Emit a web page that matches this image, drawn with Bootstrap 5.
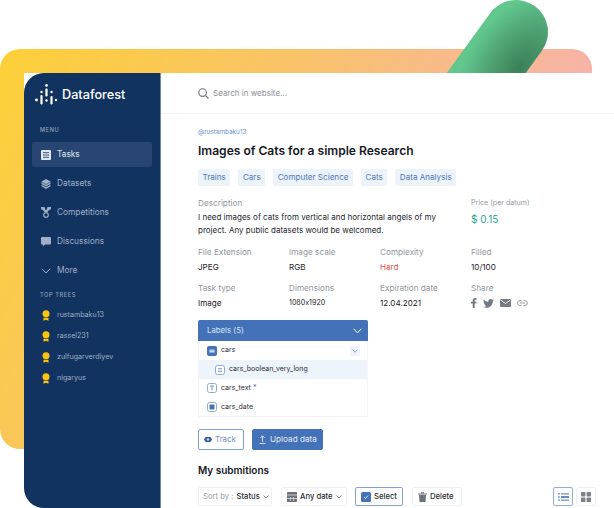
<!DOCTYPE html>
<html lang="en">
<head>
  <meta charset="UTF-8">
  <title>Dataforest</title>
  <link href="https://cdn.jsdelivr.net/npm/bootstrap@5.3.3/dist/css/bootstrap.min.css" rel="stylesheet">
  <style>
    html, body { height: 100%; }
    body { background: #fff; overflow: hidden; font-family: Inter, "Liberation Sans", sans-serif; color: #1b1f26; font-feature-settings: "calt" 0; }
    svg { flex: none; }
    .stage { position: relative; width: 614px; height: 508px; overflow: hidden; padding: 73px 0 0 24px; }
    .back-panel { position: absolute; left: 0; top: 49px; width: 592px; height: 400px; border-radius: 20px; background: linear-gradient(116deg, #fdd038 0%, #f9c464 35%, #f7b3a7 76%); }
    .green-pill { position: absolute; left: 484px; top: 0; width: 64px; height: 190px; border-radius: 32px; transform-origin: 32px 32px; transform: rotate(36deg); background: radial-gradient(ellipse 52px 85px at 56px 58px, #3b7f58 0%, #52a878 60%, #62c78d 100%); }
    .app-window { position: relative; width: 590px; height: 435px; background: #fff; }
    .side { width: 137px; height: 435px; flex: none; background: #12335f; border-radius: 20px 0 0 20px; border-right: 1px solid #6f87a8; color: #fff; padding: 9px 8px 0; }
    .brand { font-size: 12.7px; font-weight: 500; height: 26px; padding-left: 3px; gap: 5px; }
    .side-head { font-size: 5.6px; letter-spacing: .6px; color: #93a3bb; font-weight: 500; padding-left: 8px; line-height: 8px; }
    .side-link { height: 25px; margin-bottom: 4px; padding-left: 9px; gap: 6px; font-size: 8.3px; color: #9fb0c7; border-radius: 2px; }
    .side-link.is-on { background: #294672; color: #dfe6f0; }
    .tree-row { height: 21px; padding-left: 10px; gap: 7px; font-size: 7.1px; color: #9fb0c7; }
    .page { flex: 1; min-width: 0; }
    .search-bar { height: 41px; padding-left: 37px; gap: 4px; border-bottom: 1px solid #eef0f4; font-size: 8px; color: #8a8f98; }
    .content { padding: 14px 18px 0 37px; }
    .by-line { font-size: 6.4px; color: #6b90cc; line-height: 9px; }
    .title { font-size: 12.05px; font-weight: 600; line-height: 18px; margin: 5px 0 9px; color: #16191f; }
    .chip { height: 17px; padding: 0 4.5px; font-size: 8.1px; line-height: 17px; color: #4f78ba; background: #edf3fb; border-radius: 2px; }
    .info-grid { display: grid; grid-template-columns: repeat(4, 91px); margin-top: 11px; }
    .info-wide { grid-column: span 3; }
    .info-key { font-size: 8.2px; color: #92979f; line-height: 12px; }
    .info-val { font-size: 8.1px; color: #1e2228; line-height: 12px; margin-top: 3px; }
    .info-val.tight { font-size: 7.1px; }
    .info-text { font-size: 8px; line-height: 13px; color: #24282e; margin-top: 2px; }
    .price-key { font-size: 7.1px; }
    .price-val { font-size: 10px; line-height: 14px; color: #21a68c; margin-top: 3px; }
    .hard { color: #d9534f; }
    .cell-gap { margin-top: 9px; }
    .labels-box { width: 170px; margin-top: 11px; border-bottom: 1px solid #f0f1f5; border-left: 1px solid #f5f6f8; border-right: 1px solid #f5f6f8; }
    .labels-top { height: 21px; margin: 0 -1px; padding: 0 6px 0 9px; background: #4372b8; color: #d9e4f4; font-size: 7.8px; border-radius: 2px 2px 0 0; }
    .label-row { height: 19px; padding-left: 8px; gap: 4px; font-size: 7px; color: #2a2e35; }
    .label-row.sub { background: #edf4fc; padding-left: 16px; }
    .label-row.lh { height: 18.5px; }
    .fold { width: 10px; height: 10px; background: #edf3fb; margin-right: 7px; border-radius: 1px; }
    .req { color: #4372b8; font-size: 7px; }
    .act-btn { height: 21px; padding: 0 7px; font-size: 8.2px; border-radius: 2px; gap: 4px; line-height: 1; white-space: nowrap; }
    .act-btn.track { color: #6f8fc4; background: #fff; border: 1px solid #7fa1d2; width: 46px; padding: 0 0 0 5px; gap: 3px; font-size: 7.9px; }
    .act-btn.upload { color: #e3ebf7; background: #4372b8; border: 1px solid #4372b8; width: 71px; padding-left: 6px; }
    .sub-head { font-size: 10px; font-weight: 600; line-height: 14px; margin-top: 13px; color: #16191f; }
    .tool-row { margin-top: 10px; height: 19px; }
    .tool { height: 19px; border: 1px solid #eef0f4; border-radius: 2px; gap: 3px; font-size: 7.7px; color: #2a2e35; padding: 0 4px; font-weight: 500; white-space: nowrap; }
    .tool.mute-lead span:first-child { color: #9a9ea6; font-weight: 400; }
    .tool.picked { border-color: #7fa1d2; }
    .view-btn { width: 20px; height: 19px; border: 1px solid #eef0f4; border-radius: 2px; }
    .view-btn.picked { border-color: #8eb0dd; }
  </style>
</head>
<body>
  <div class="stage">
    <div class="back-panel"></div>
    <div class="green-pill"></div>

    <div class="app-window d-flex">
      <!-- Sidebar -->
      <aside class="side">
        <div class="brand d-flex align-items-center">
          <svg width="22" height="22" viewBox="0 0 22 22" fill="#fff">
            <circle cx="1.500" cy="16" r="1.400"/>
            <circle cx="6.500" cy="8" r="1.200"/><rect x="5.400" y="11" width="2.200" height="9.500" rx="1"/>
            <circle cx="11.500" cy="1.400" r="1.300"/><rect x="10.400" y="4.500" width="2.200" height="8" rx="1"/><circle cx="11.500" cy="16.500" r="1.200"/>
            <circle cx="16.500" cy="8" r="1.200"/><rect x="15.400" y="12" width="2.200" height="8.500" rx="1"/>
            <circle cx="21" cy="16" r="1.200"/>
          </svg>
          <span>Dataforest</span>
        </div>
        <div class="side-head" style="margin-top:18px;margin-bottom:8px">MENU</div>
        <div class="side-link is-on d-flex align-items-center">
          <svg width="10" height="10" viewBox="0 0 10 10"><rect width="10" height="10" rx="1" fill="#dfe6f0"/><path d="M2 2.700h6M2 5h6M2 7.300h6" stroke="#294672" stroke-width=".9"/></svg>
          <span>Tasks</span>
        </div>
        <div class="side-link d-flex align-items-center">
          <svg width="10" height="10" viewBox="0 0 10 10" fill="#9fb0c7"><path d="M5 0 9.500 2.500V5L5 7.500.5 5V2.500z"/><path d="M.5 5.800 5 8.300l4.500-2.500v1.400L5 10 .5 7.200z"/><path d="M.5 3 5 5.500 9.500 3" fill="none" stroke="#12335f" stroke-width=".5"/></svg>
          <span>Datasets</span>
        </div>
        <div class="side-link d-flex align-items-center">
          <svg width="10" height="11" viewBox="0 0 10 11"><path d="M0 0h3.500l1 3h1l1-3H10v2L7 4 6.300 5.500H3.700L3 4 0 2z" fill="#9fb0c7"/><circle cx="5" cy="8" r="2.300" fill="none" stroke="#9fb0c7" stroke-width="1.100"/></svg>
          <span>Competitions</span>
        </div>
        <div class="side-link d-flex align-items-center">
          <svg width="10" height="10" viewBox="0 0 10 10" fill="#9fb0c7"><path d="M1 0h8a1 1 0 0 1 1 1v5.500a1 1 0 0 1-1 1H4L2 9.500v-2H1a1 1 0 0 1-1-1V1a1 1 0 0 1 1-1z"/></svg>
          <span>Discussions</span>
        </div>
        <div class="side-link d-flex align-items-center" style="margin-bottom:0">
          <svg width="10" height="6" viewBox="0 0 10 6" fill="none" stroke="#b4c1d4" stroke-width=".9"><path d="M1 .8 5 5l4-4.200"/></svg>
          <span>More</span>
        </div>
        <div class="side-head" style="margin-top:8px;margin-bottom:6px">TOP TREES</div>
        <div class="tree-row d-flex align-items-center"><svg width="8" height="11" viewBox="0 0 8 11" fill="#fdc50f"><circle cx="4" cy="3.700" r="3.500"/><path d="M1.500 7.700h5v3.100L4 9.700 1.500 10.800z"/></svg><span>rustambaku13</span></div>
        <div class="tree-row d-flex align-items-center"><svg width="8" height="11" viewBox="0 0 8 11" fill="#fdc50f"><circle cx="4" cy="3.700" r="3.500"/><path d="M1.500 7.700h5v3.100L4 9.700 1.500 10.800z"/></svg><span>rassel231</span></div>
        <div class="tree-row d-flex align-items-center"><svg width="8" height="11" viewBox="0 0 8 11" fill="#fdc50f"><circle cx="4" cy="3.700" r="3.500"/><path d="M1.500 7.700h5v3.100L4 9.700 1.500 10.800z"/></svg><span>zulfugarverdiyev</span></div>
        <div class="tree-row d-flex align-items-center"><svg width="8" height="11" viewBox="0 0 8 11" fill="#fdc50f"><circle cx="4" cy="3.700" r="3.500"/><path d="M1.500 7.700h5v3.100L4 9.700 1.500 10.800z"/></svg><span>nigaryus</span></div>
      </aside>

      <!-- Main page -->
      <main class="page">
        <div class="search-bar d-flex align-items-center">
          <svg width="11" height="11" viewBox="0 0 11 11" fill="none" stroke="#6f747c" stroke-width="1.100"><circle cx="4.600" cy="4.600" r="3.800"/><path d="m7.500 7.500 3 3"/></svg>
          <span>Search in website...</span>
        </div>
        <div class="content">
          <div class="by-line">@rustambaku13</div>
          <h1 class="title">Images of Cats for a simple Research</h1>
          <div class="d-flex" style="gap:8px">
            <span class="chip">Trains</span>
            <span class="chip">Cars</span>
            <span class="chip">Computer Science</span>
            <span class="chip">Cats</span>
            <span class="chip">Data Analysis</span>
          </div>

          <div class="info-grid">
            <div class="info-wide">
              <div class="info-key">Description</div>
              <div class="info-text">I need images of cats from vertical and horizontal angels of my<br>project. Any public datasets would be welcomed.</div>
            </div>
            <div>
              <div class="info-key price-key">Price (per datum)</div>
              <div class="price-val">$ 0.15</div>
            </div>
            <div class="cell-gap"><div class="info-key">File Extension</div><div class="info-val">JPEG</div></div>
            <div class="cell-gap"><div class="info-key">Image scale</div><div class="info-val">RGB</div></div>
            <div class="cell-gap"><div class="info-key">Complexity</div><div class="info-val hard">Hard</div></div>
            <div class="cell-gap"><div class="info-key">Filled</div><div class="info-val">10/100</div></div>
            <div class="cell-gap"><div class="info-key">Task type</div><div class="info-val">Image</div></div>
            <div class="cell-gap"><div class="info-key">Dimensions</div><div class="info-val tight">1080x1920</div></div>
            <div class="cell-gap"><div class="info-key">Expiration date</div><div class="info-val">12.04.2021</div></div>
            <div class="cell-gap">
              <div class="info-key">Share</div>
              <div class="d-flex align-items-center" style="gap:6px;margin-top:3px;height:12px">
                <svg width="6" height="10" viewBox="0 0 6 10" fill="#757b85"><path d="M1.700 10V5.500H0V3.700h1.700V2.400C1.700.800 2.700 0 4.100 0c.7 0 1.300 0 1.500.1v1.600h-1c-.8 0-.9.4-.9.900v1.100h1.900l-.3 1.800H3.700V10z"/></svg>
                <svg width="11" height="9" viewBox="0 0 24 20" fill="#757b85"><path d="M24 2.400a9.600 9.600 0 0 1-2.800.8A4.900 4.900 0 0 0 23.300.500a9.800 9.800 0 0 1-3.100 1.200 4.900 4.900 0 0 0-8.400 4.500A14 14 0 0 1 1.700.900a4.900 4.900 0 0 0 1.500 6.600 4.900 4.900 0 0 1-2.200-.6c0 2.400 1.700 4.400 3.900 4.900a4.900 4.900 0 0 1-2.200.1 4.900 4.900 0 0 0 4.600 3.400A9.900 9.900 0 0 1 0 17.300 14 14 0 0 0 7.500 19.500c9.100 0 14-7.500 14-14v-.6A10 10 0 0 0 24 2.400z"/></svg>
                <svg width="11" height="8" viewBox="0 0 11 8"><rect width="11" height="8" rx="1" fill="#757b85"/><path d="m.5 1 5 3.500 5-3.500" fill="none" stroke="#fff" stroke-width=".8"/></svg>
                <svg width="11" height="6" viewBox="0 0 11 6" fill="none" stroke="#8e939b" stroke-width=".9"><path d="M4.500.6H3a2.400 2.400 0 0 0 0 4.800h1.500M6.500.6H8a2.400 2.400 0 0 1 0 4.800H6.500M3 3h5"/></svg>
              </div>
            </div>
          </div>

          <!-- Labels -->
          <div class="labels-box">
            <div class="labels-top d-flex align-items-center justify-content-between">
              <span>Labels (5)</span>
              <svg width="9" height="6" viewBox="0 0 9 6" fill="none" stroke="#fff" stroke-width="1"><path d="M.7.800 4.500 4.800 8.300.8"/></svg>
            </div>
            <div class="label-row d-flex align-items-center">
              <svg width="10" height="10" viewBox="0 0 10 10"><rect width="10" height="10" rx="2" fill="#4372b8"/><path d="M2.500 3.500h5v3h-5z" fill="#dfe8f5"/><path d="m2.500 3.500 2.500 1.700 2.500-1.700" fill="none" stroke="#4372b8" stroke-width=".5"/></svg>
              <span class="flex-grow-1">cars</span>
              <span class="fold d-flex align-items-center justify-content-center"><svg width="6" height="4" viewBox="0 0 6 4" fill="none" stroke="#7f9cc9" stroke-width=".8"><path d="m.5.500 2.500 2.700L5.500.5"/></svg></span>
            </div>
            <div class="label-row sub d-flex align-items-center">
              <svg width="10" height="10" viewBox="0 0 10 10" fill="none"><rect x=".5" y=".5" width="9" height="9" rx="2" fill="#fff" stroke="#8eaad4"/><path d="M3 3.800h4M7 6.200H3" stroke="#4372b8" stroke-width=".8"/></svg>
              <span>cars_boolean_very_long</span>
            </div>
            <div class="label-row lh d-flex align-items-center">
              <svg width="10" height="10" viewBox="0 0 10 10" fill="none"><rect x=".5" y=".5" width="9" height="9" rx="2" stroke="#8eaad4"/><path d="M3 3h4M5 3v4.500" stroke="#5c7fb8" stroke-width=".8"/></svg>
              <span>cars_text <span class="req">*</span></span>
            </div>
            <div class="label-row lh d-flex align-items-center">
              <svg width="10" height="10" viewBox="0 0 10 10" fill="none"><rect x=".5" y=".5" width="9" height="9" rx="2" stroke="#8eaad4"/><rect x="2.500" y="2.500" width="5" height="5" fill="#4372b8"/></svg>
              <span>cars_date</span>
            </div>
          </div>

          <div class="d-flex" style="gap:8px;margin-top:12px">
            <button class="btn act-btn track d-flex align-items-center">
              <svg width="8" height="7" viewBox="0 0 8 7"><path d="M0 3.500 1.500 1h5L8 3.500 6.500 6h-5z" fill="#2f5da3"/><circle cx="4" cy="3.500" r="1.200" fill="#cfdcf0"/></svg>
              <span>Track</span>
            </button>
            <button class="btn act-btn upload d-flex align-items-center">
              <svg width="7" height="9" viewBox="0 0 7 9" fill="none" stroke="#e3ebf7" stroke-width=".9"><path d="M3.500 7V1M1.300 3 3.500.800 5.700 3M.5 8.500h6"/></svg>
              <span>Upload data</span>
            </button>
          </div>

          <h2 class="sub-head">My submitions</h2>

          <div class="tool-row d-flex align-items-center justify-content-between">
            <div class="d-flex" style="gap:9px">
              <div class="tool mute-lead d-flex align-items-center" style="width:74px">
                <span>Sort by :</span><span>Status</span>
                <svg width="6" height="4" viewBox="0 0 6 4" fill="none" stroke="#555" stroke-width=".7" class="ms-auto"><path d="m.5.500 2.500 2.500L5.500.5"/></svg>
              </div>
              <div class="tool d-flex align-items-center" style="width:66px;padding-left:5px">
                <svg width="10" height="10" viewBox="0 0 10 10"><rect width="10" height="10" rx="1" fill="#6d727a"/><path d="M0 3h10M3.300 5v4M6.600 5v4M0 6.500h10" stroke="#fff" stroke-width=".6"/></svg>
                <span>Any date</span>
                <svg width="6" height="4" viewBox="0 0 6 4" fill="none" stroke="#555" stroke-width=".7" class="ms-auto"><path d="m.5.500 2.500 2.500L5.500.5"/></svg>
              </div>
              <div class="tool picked d-flex align-items-center" style="width:48px;padding-left:5px;margin-left:-1px">
                <svg width="10" height="10" viewBox="0 0 10 10"><rect width="10" height="10" rx="1.500" fill="#4372b8"/><path d="m3 5.200 1.500 1.400L7 3.500" fill="none" stroke="#fff" stroke-width=".8"/></svg>
                <span>Select</span>
              </div>
              <div class="tool d-flex align-items-center" style="width:50px;padding-left:5px">
                <svg width="9" height="10" viewBox="0 0 9 10" fill="#6d727a"><path d="M0 1.500h9v1H0zM3 .2h3v1H3zM1 3h7l-.5 7h-6z"/></svg>
                <span>Delete</span>
              </div>
            </div>
            <div class="d-flex" style="gap:3px">
              <div class="view-btn picked d-flex align-items-center justify-content-center">
                <svg width="11" height="8" viewBox="0 0 11 8" fill="#8eaad4"><rect width="2" height="1.600"/><rect x="3" width="8" height="1.600"/><rect y="3.200" width="2" height="1.600"/><rect x="3" y="3.200" width="8" height="1.600" fill="#4372b8"/><rect y="6.400" width="2" height="1.600"/><rect x="3" y="6.400" width="8" height="1.600"/></svg>
              </div>
              <div class="view-btn d-flex align-items-center justify-content-center">
                <svg width="10" height="10" viewBox="0 0 10 10" fill="#7d828a"><rect width="4.400" height="4.400" rx=".6"/><rect x="5.600" width="4.400" height="4.400" rx=".6"/><rect y="5.600" width="4.400" height="4.400" rx=".6"/><rect x="5.600" y="5.600" width="4.400" height="4.400" rx=".6"/></svg>
              </div>
            </div>
          </div>
        </div>
      </main>
    </div>
  </div>

  <script src="https://cdn.jsdelivr.net/npm/bootstrap@5.3.3/dist/js/bootstrap.bundle.min.js"></script>
</body>
</html>
